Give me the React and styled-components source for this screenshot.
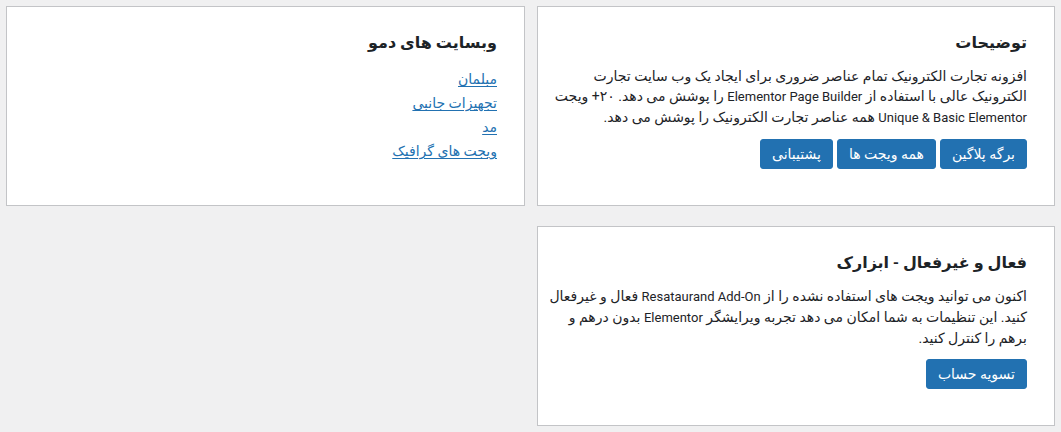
import React from 'react'
import styled, { createGlobalStyle } from 'styled-components'

const GlobalStyle = createGlobalStyle`
  body {
    margin: 0;
    background: #f0f0f1;
    font-family: Roboto, "DejaVu Sans", sans-serif;
    color: #1d2327;
  }
`

const Page = styled.div`
  direction: rtl;
  display: grid;
  grid-template-columns: 518px 519px;
  column-gap: 12px;
  row-gap: 20px;
  padding: 6px;
  align-items: stretch;
`

const Card = styled.div`
  background: #fff;
  border: 1px solid #c3c4c7;
  padding: 24px 27px 36px;
  box-sizing: border-box;
`

const Title = styled.h2`
  margin: 0 0 12px;
  font-size: 16px;
  font-weight: 600;
  line-height: 23px;
  color: #1d2327;
`

const Text = styled.p`
  margin: 0 0 11px;
  font-size: 14px;
  line-height: 20px;
  white-space: nowrap;
`

const Latin = styled.span`
  font-size: 13px;
`

const Buttons = styled.div`
  display: flex;
  gap: 4px;
`

const Button = styled.a`
  display: inline-flex;
  align-items: center;
  height: 30px;
  padding: 0 11px;
  box-sizing: border-box;
  background: #2271b1;
  border: 1px solid #2271b1;
  border-radius: 3px;
  color: #fff;
  font-size: 14px;
  text-decoration: none;
  cursor: pointer;
`

const LinkList = styled.ul`
  list-style: none;
  margin: 15px 0 0;
  padding: 0;
  display: flex;
  flex-direction: column;
  gap: 4px;
`

const LinkItem = styled.li`
  line-height: 20px;
  height: 20px;
`

const DemoLink = styled.a`
  font-size: 14px;
  line-height: 20px;
  color: #2271b1;
  text-decoration: underline;
  text-underline-offset: 2px;
`

const demos = ['مبلمان', 'تجهیزات جانبی', 'مد', 'ویجت های گرافیک']

export default function App() {
  return (
    <>
      <GlobalStyle />
      <Page>
        <Card>
          <Title>توضیحات</Title>
          <Text>
            افزونه تجارت الکترونیک تمام عناصر ضروری برای ایجاد یک وب سایت تجارت
            <br />
            الکترونیک عالی با استفاده از <Latin>Elementor Page Builder</Latin> را پوشش می دهد. ۲۰+ ویجت
            <br />
            <Latin>Unique &amp; Basic Elementor</Latin> همه عناصر تجارت الکترونیک را پوشش می دهد.
          </Text>
          <Buttons>
            <Button>برگه پلاگین</Button>
            <Button>همه ویجت ها</Button>
            <Button>پشتیبانی</Button>
          </Buttons>
        </Card>
        <Card>
          <Title>وبسایت های دمو</Title>
          <LinkList>
            {demos.map((d) => (
              <LinkItem key={d}>
                <DemoLink href="#">{d}</DemoLink>
              </LinkItem>
            ))}
          </LinkList>
        </Card>
        <Card>
          <Title>فعال و غیرفعال - ابزارک</Title>
          <Text>
            اکنون می توانید ویجت های استفاده نشده را از <Latin>Resataurand Add-On</Latin> فعال و غیرفعال
            <br />
            کنید. این تنظیمات به شما امکان می دهد تجربه ویرایشگر <Latin>Elementor</Latin> بدون درهم و
            <br />
            برهم را کنترل کنید.
          </Text>
          <Buttons>
            <Button>تسویه حساب</Button>
          </Buttons>
        </Card>
      </Page>
    </>
  )
}
